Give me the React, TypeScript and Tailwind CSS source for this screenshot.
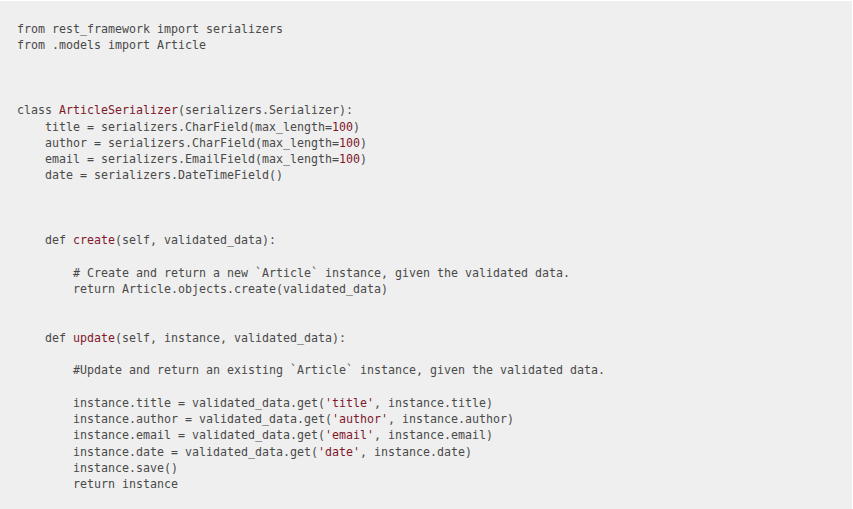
type Seg = string | { r: string };

const lines: Seg[][] = [
  ['from rest_framework import serializers'],
  ['from .models import Article'],
  [],
  [],
  [],
  ['class ', { r: 'ArticleSerializer' }, '(serializers.Serializer):'],
  ['    title = serializers.CharField(max_length=', { r: '100' }, ')'],
  ['    author = serializers.CharField(max_length=', { r: '100' }, ')'],
  ['    email = serializers.EmailField(max_length=', { r: '100' }, ')'],
  ['    date = serializers.DateTimeField()'],
  [],
  [],
  [],
  ['    def ', { r: 'create' }, '(self, validated_data):'],
  [],
  ['        # Create and return a new `Article` instance, given the validated data.'],
  ['        return Article.objects.create(validated_data)'],
  [],
  [],
  ['    def ', { r: 'update' }, '(self, instance, validated_data):'],
  [],
  ['        #Update and return an existing `Article` instance, given the validated data.'],
  [],
  ["        instance.title = validated_data.get(", { r: "'title'" }, ', instance.title)'],
  ["        instance.author = validated_data.get(", { r: "'author'" }, ', instance.author)'],
  ["        instance.email = validated_data.get(", { r: "'email'" }, ', instance.email)'],
  ["        instance.date = validated_data.get(", { r: "'date'" }, ', instance.date)'],
  ['        instance.save()'],
  ['        return instance'],
];

export default function App() {
  return (
    <div className="h-[509px] w-[853px] bg-white pt-px pr-px">
      <pre className="h-full overflow-hidden bg-[#efefef] pt-[20px] pl-[17px] font-['DejaVu_Sans_Mono',monospace] text-[11.63px] leading-[16.25px] text-[#4a4a4a]">
        {lines.map((line, i) => (
          <div key={i} className="h-[16.25px] whitespace-pre">
            {line.map((s, j) =>
              typeof s === 'string' ? (
                <span key={j}>{s}</span>
              ) : (
                <span key={j} className="text-[#80182a]">
                  {s.r}
                </span>
              ),
            )}
          </div>
        ))}
      </pre>
    </div>
  );
}
